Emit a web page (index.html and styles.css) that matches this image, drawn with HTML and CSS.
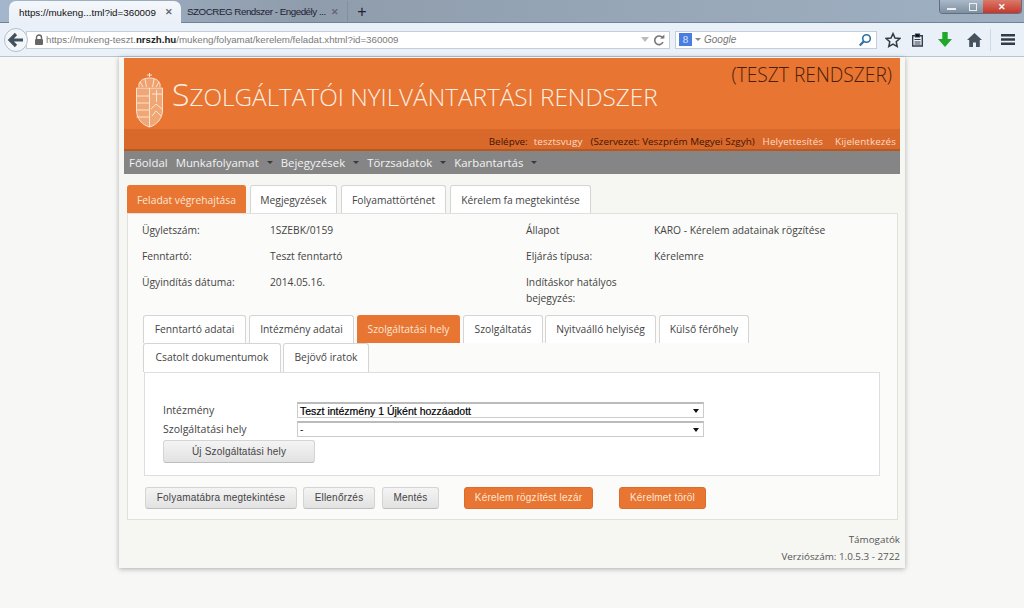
FILE: index.html
```html
<!DOCTYPE html>
<html lang="hu">
<head>
<meta charset="utf-8">
<title>Szolgáltatói nyilvántartási rendszer</title>
<link rel="stylesheet" href="styles.css">
</head>
<body>
<div class="tabstrip">
  <div class="btab active"><span class="btab-title">https://mukeng...tml?id=360009</span><span class="btab-x">✕</span></div>
  <div class="btab"><span class="btab-title">SZOCREG Rendszer - Engedély ...</span><span class="btab-x">✕</span></div>
  <div class="newtab">+</div>
  <div class="winctl"><span class="wc wc-min"><i></i></span><span class="wc wc-max"><i></i></span><span class="wc wc-close">✕</span></div>
</div>
<div class="toolbar">
  <div class="back"><svg width="18" height="16" viewBox="0 0 18 16"><path d="M9 2 3 8l6 6M3.500 8H16" fill="none" stroke="#44505c" stroke-width="3.200"/></svg></div>
  <div class="urlbar">
    <svg class="lock" width="10" height="11" viewBox="0 0 10 11"><path d="M2.500 5V3.500a2.500 2.500 0 0 1 5 0V5" fill="none" stroke="#666" stroke-width="1.400"/><rect x="1" y="5" width="8" height="6" rx="1" fill="#666"/></svg>
    <span class="url">https://mukeng-teszt.<b>nrszh.hu</b>/mukeng/folyamat/kerelem/feladat.xhtml?id=360009</span>
    <span class="url-drop"></span>
    <svg class="reload" width="12" height="12" viewBox="0 0 12 12"><path d="M9.800 4.200A4.300 4.300 0 1 0 10 8" fill="none" stroke="#777" stroke-width="1.600"/><path d="M7 4.600h4.400V.4z" fill="#777"/></svg>
  </div>
  <div class="searchbar">
    <span class="g-icon">8</span><span class="g-drop"></span><span class="g-text">Google</span>
    <svg class="mag" width="14" height="14" viewBox="0 0 14 14"><circle cx="8.500" cy="5.500" r="3.800" fill="none" stroke="#2a6fa8" stroke-width="1.600"/><path d="M5.600 8.400 1.800 12.400" stroke="#2a6fa8" stroke-width="2.200"/></svg>
  </div>
  <div class="tools">
    <svg width="16" height="16" viewBox="0 0 16 16"><path d="m8 1.600 2 4.400 4.800.5-3.600 3.200 1 4.700L8 12l-4.200 2.400 1-4.700L1.200 6.500 6 6z" fill="none" stroke="#333c46" stroke-width="1.500"/></svg>
    <svg class="t-clip" width="13" height="14" viewBox="0 0 13 14"><path d="M1.700 2.700h9.600v10.300H1.700z" fill="none" stroke="#333c46" stroke-width="1.400"/><path d="M4.500 1h4v3h-4zM3.500 6.500h6M3.500 9h6M3.500 11h6" stroke="#333c46" stroke-width="1.200"/></svg>
    <svg class="t-down" width="14" height="15" viewBox="0 0 14 15"><path d="M4.300 0h5.400v7H14l-7 8-7-8h4.300z" fill="#1fa82a"/></svg>
    <svg class="t-home" width="15" height="14" viewBox="0 0 15 14"><path d="M7.500 0 0 7h2.200v7h3.800V9.500h3V14h3.800V7H15z" fill="#46525e"/></svg>
    <span class="t-sep"></span>
    <svg class="t-menu" width="14" height="11" viewBox="0 0 14 11"><path d="M0 0h14v2.400H0zM0 4.300h14v2.400H0zM0 8.600h14V11H0z" fill="#333c46"/></svg>
  </div>
</div>
<main class="page">
  <div class="sheet">
    <header class="banner">
      <div class="banner-top">
        <svg class="arms" width="29" height="56" viewBox="0 0 29 56"><g fill="none" stroke="#fbe3d0" stroke-width="1"><path d="M14.500 1v4M12 3h5"/><path d="M4 15C3 10 7 6 14.500 6S26 10 25 15" fill="#f6cfae" fill-opacity=".5"/><path d="M5 10l3 5M10 7l1.500 8M19 7l-1.500 8M24 10l-3 5"/><path d="M1.500 16h26v22c0 9-6 15-13 17C7.500 53 1.500 47 1.500 38z" fill="#f6cfae" fill-opacity=".55"/><path d="M14.500 16v39M1.500 24h13M1.500 31h13M1.500 38h13M1.500 45h13M17 22h10M21.500 18v12M16 37l5-5 6 5M17 44l4-5 5 5"/></g></svg>
        <h1 class="title">Szolgáltatói nyilvántartási rendszer</h1>
        <div class="test-mark">(TESZT RENDSZER)</div>
      </div>
      <div class="userbar">
        <span class="ulabel">Belépve:</span><a class="ulink">tesztsvugy</a><span>(Szervezet: Veszprém Megyei Szgyh)</span><a class="ulink">Helyettesítés</a><a class="ulink">Kijelentkezés</a>
      </div>
    </header>
    <nav class="mainnav">
      <a class="navi">Főoldal</a>
      <a class="navi drop">Munkafolyamat</a>
      <a class="navi drop">Bejegyzések</a>
      <a class="navi drop">Törzsadatok</a>
      <a class="navi drop">Karbantartás</a>
    </nav>
    <div class="tabs maintabs">
      <a class="tab on">Feladat végrehajtása</a>
      <a class="tab">Megjegyzések</a>
      <a class="tab">Folyamattörténet</a>
      <a class="tab">Kérelem fa megtekintése</a>
    </div>
    <section class="panel">
      <dl class="info">
        <dt>Ügyletszám:</dt><dd>1SZEBK/0159</dd><dt>Állapot</dt><dd>KARO - Kérelem adatainak rögzítése</dd>
        <dt>Fenntartó:</dt><dd>Teszt fenntartó</dd><dt>Eljárás típusa:</dt><dd>Kérelemre</dd>
        <dt>Ügyindítás dátuma:</dt><dd>2014.05.16.</dd><dt>Indításkor hatályos bejegyzés:</dt><dd></dd>
      </dl>
      <div class="tabs subtabs">
        <a class="tab">Fenntartó adatai</a>
        <a class="tab">Intézmény adatai</a>
        <a class="tab on">Szolgáltatási hely</a>
        <a class="tab">Szolgáltatás</a>
        <a class="tab">Nyitvaálló helyiség</a>
        <a class="tab">Külső férőhely</a>
        <a class="tab">Csatolt dokumentumok</a>
        <a class="tab">Bejövő iratok</a>
      </div>
      <div class="subpanel">
        <div class="field"><span class="flabel">Intézmény</span><div class="select strong">Teszt intézmény 1 Újként hozzáadott</div></div>
        <div class="field"><span class="flabel">Szolgáltatási hely</span><div class="select">-</div></div>
        <a class="btn btn-new">Új Szolgáltatási hely</a>
      </div>
      <div class="actions">
        <a class="btn">Folyamatábra megtekintése</a>
        <a class="btn">Ellenőrzés</a>
        <a class="btn">Mentés</a>
        <a class="btn primary">Kérelem rögzítést lezár</a>
        <a class="btn primary">Kérelmet töröl</a>
      </div>
    </section>
    <footer class="foot">
      <div>Támogatók</div>
      <div>Verziószám: 1.0.5.3 - 2722</div>
    </footer>
  </div>
</main>
</body>
</html>
```
FILE: styles.css
```css
* { box-sizing: border-box; }
html, body { margin: 0; height: 608px; overflow: hidden; }
body { background: #f7f7f5; font-family: "Open Sans", sans-serif; color: #444; }
a { cursor: pointer; }

.tabstrip { height: 23px; display: flex; align-items: flex-end; padding-left: 9px; position: relative;
  background: linear-gradient(90deg, #a3b6cc 0, #8f9cab 30%, #96a6b7 60%, #9fb0c2 100%); border-bottom: 1px solid #6f8398; }
.btab { flex: none; width: 172px; height: 21px; display: flex; align-items: center; justify-content: space-between; padding: 0 8px 0 10px;
  font: 9.800px "Liberation Sans", sans-serif; color: #223; white-space: nowrap; }
.btab + .btab { width: 167px; padding: 0 8px 0 6px; border-right: 1px solid #7f90a3; letter-spacing: -.48px; }
.btab.active { background: linear-gradient(#f4f7fa, #e9f0f7); border-radius: 7px 7px 0 0; height: 22px; margin-bottom: -1px; color: #111; }
.btab-x { font-size: 9px; color: #667; font-weight: bold; }
.newtab { width: 28px; text-align: center; font: 16px/20px "Liberation Sans", sans-serif; color: #223; }
.winctl { position: absolute; right: 2px; top: 0; width: 83px; height: 14px; display: flex; border: 1px solid #5f6f80; border-top: 0; border-radius: 0 0 4px 4px; overflow: hidden; }
.wc { display: flex; align-items: center; justify-content: center; height: 100%; width: 22px; background: linear-gradient(#a9b9c9, #7f8f9f); }
.wc-max { width: 21px; }
.wc i { display: block; }
.wc-min i { width: 9px; height: 2px; margin-top: 4px; background: #eee; }
.wc-max i { width: 8px; height: 8px; border: 1px solid #eee; }
.wc-close { flex: 1; background: linear-gradient(#d97a6a, #c5382a); color: #fff; font: bold 9px "Liberation Sans", sans-serif; }

.toolbar { height: 34px; display: flex; align-items: center; padding-left: 4px; background: linear-gradient(#e9f0f7, #eaf1f8); border-bottom: 1px solid #b8c4d0; }
.back { flex: none; width: 24px; height: 24px; border-radius: 50%; background: #f3f6f9; border: 1px solid #b4c0cc; display: flex; align-items: center; justify-content: center; position: relative; z-index: 1; }
.urlbar { flex: none; width: 644px; height: 18px; margin-left: -2px; background: #fff; border: 1px solid #c4ced8; display: flex; align-items: center; padding: 0 4px 0 7px; }
.lock { margin-right: 2px; flex: none; }
.url { font: 9.700px "Liberation Sans", sans-serif; color: #7a7a7a; flex: 1; white-space: nowrap; }
.url b { color: #222; }
.url-drop { border: 4px solid transparent; border-top: 5px solid #bbb; border-bottom: 0; margin-right: 4px; }
.searchbar { flex: none; width: 202px; height: 18px; margin-left: 5px; background: #fff; border: 1px solid #c4ced8; display: flex; align-items: center; padding: 0 4px 0 3px; }
.g-icon { width: 13px; height: 13px; background: #4a7de0; color: #dfe8ff; font: 11px/13px "Liberation Serif", serif; text-align: center; }
.g-drop { border: 3px solid transparent; border-top: 3px solid #888; border-bottom: 0; margin: 0 3px 0 3px; }
.g-text { flex: 1; font: italic 10px/14px "Liberation Sans", sans-serif; color: #777; padding-top: 1px; }
.tools { flex: none; display: flex; align-items: center; margin-left: 8px; }
.t-clip { margin-left: 10px; }
.t-down { margin-left: 14px; }
.t-home { margin-left: 15px; }
.t-sep { width: 1px; height: 22px; background: #d0d8e0; margin-left: 8px; }
.t-menu { margin-left: 10px; }

.page { padding-left: 119px; }
.sheet { width: 786px; height: 511px; padding: 1px 5px 0; background: #f6f6f3; box-shadow: 0 1px 5px rgba(0,0,0,.3); }
.banner { background: #e87531; height: 93px; display: flex; flex-direction: column; border-bottom: 2px solid #b9571e; }
.banner-top { height: 71px; display: flex; position: relative; padding: 14px 0 0 11px; }
.arms { flex: none; }
.title { margin: 4px 0 0 8px; font: 300 24.300px/36px "Open Sans", sans-serif; text-transform: uppercase; color: #fdeee2; white-space: nowrap; }
.title::first-letter { font-size: 32px; }
.test-mark { position: absolute; right: 8px; top: 4px; font: 300 19.200px/26px "Open Sans", sans-serif; color: #4a1e08; }
.userbar { flex: 1; background: #d9682b; display: flex; justify-content: flex-end; align-items: center; gap: 8px; padding: 3px 4px 0 0; font-size: 9.850px; color: #3f1604; white-space: nowrap; }
.ulabel { margin-right: -2px; }
.ulink { color: #fbdcc4; letter-spacing: .1px; }
.userbar .ulink:last-child { margin-left: 4px; }

.mainnav { height: 23px; background: #858585; display: flex; align-items: center; padding-left: 5px; gap: 8px; font-size: 11.400px; color: #f2f2f2; }
.navi.drop { display: flex; align-items: center; gap: 8px; }
.navi.drop::after { content: ""; border: 3px solid transparent; border-top: 3px solid #3a3a3a; border-bottom: 0; }

.tabs { display: flex; flex-wrap: wrap; }
.tab { display: block; background: #fff; border: 1px solid #d5d5d5; border-bottom: 0; border-radius: 3px 3px 0 0; font-size: 10.300px; text-align: center; color: #444; white-space: nowrap; }
.tab.on { background: #e87531; border-color: #e87531; color: #fbe6d6; }
.maintabs { margin: 11px 0 0 3px; gap: 4px; }
.maintabs .tab { height: 28px; line-height: 28px; }
.maintabs .tab:nth-child(1) { width: 119px; }
.maintabs .tab:nth-child(2) { width: 87px; }
.maintabs .tab:nth-child(3) { width: 105px; }
.maintabs .tab:nth-child(4) { width: 141px; letter-spacing: -.03px; }

.panel { margin: 0 2px 0 3px; height: 307px; background: #fbfbf9; border: 1px solid #e0e0dc; padding: 0 17px 0 15px; }
.info { margin: 0 0 0 -1px; height: 101px; padding-top: 8px; display: grid; grid-template-columns: 128px 256px 128px 1fr; grid-template-rows: 26px 26px 40px; font-size: 10.250px; line-height: 16px; color: #444; }
.info dt, .info dd { margin: 0; }
.info dt:nth-of-type(6) { width: 110px; }

.subtabs { column-gap: 3px; width: 720px; }
.subtabs .tab { height: 28px; line-height: 27px; }
.subtabs .tab:nth-child(1) { width: 103px; }
.subtabs .tab:nth-child(2) { width: 105px; }
.subtabs .tab:nth-child(3) { width: 103px; }
.subtabs .tab:nth-child(4) { width: 80px; }
.subtabs .tab:nth-child(5) { width: 111px; margin-left: -1px; }
.subtabs .tab:nth-child(6) { width: 90px; }
.subtabs .tab:nth-child(7) { width: 138px; height: 29px; }
.subtabs .tab:nth-child(8) { width: 86px; height: 29px; margin-left: -1px; }

.subpanel { margin: 0 0 0 1px; height: 104px; background: #fff; border: 1px solid #dedede; padding: 27px 18px 0; }
.field { display: flex; align-items: center; height: 19px; font-size: 10.500px; color: #444; }
.flabel { width: 134px; }
.select { width: 407px; height: 16px; border: 1px solid #ccc; border-top: 2px solid #bbb; background: #fff; font: 10px/14px "Liberation Sans", sans-serif; color: #222; padding-left: 2px; position: relative; }
.select.strong { font-size: 10.500px; font-weight: normal; color: #000; -webkit-text-stroke: .2px #000; }
.select::after { content: ""; position: absolute; right: 4px; top: 5px; border: 3.500px solid transparent; border-top: 4px solid #111; border-bottom: 0; }

.btn { display: inline-block; height: 22px; background: linear-gradient(#f4f4f4, #e2e2e2); border: 1px solid #d4d4d4; border-bottom: 1px solid #bdbdbd; border-radius: 3px; font: 10px/20px "Liberation Sans", sans-serif; letter-spacing: .2px; color: #444; text-align: center; }
.btn-new { width: 152px; height: 23px; margin-top: 2px; line-height: 21px; }
.actions { display: flex; margin: 11px 0 0 2px; }
.actions .btn:nth-child(1) { width: 152px; }
.actions .btn:nth-child(2) { width: 72px; margin-left: 6px; }
.actions .btn:nth-child(3) { width: 57px; margin-left: 7px; }
.actions .btn:nth-child(4) { width: 129px; margin-left: 25px; }
.actions .btn:nth-child(5) { width: 87px; margin-left: 26px; }
.btn.primary { background: #e87531; border-color: #dd6c2b; color: #fde6d5; }

.foot { text-align: right; font-size: 9.850px; color: #555; padding-top: 11px; line-height: 17px; }
```
